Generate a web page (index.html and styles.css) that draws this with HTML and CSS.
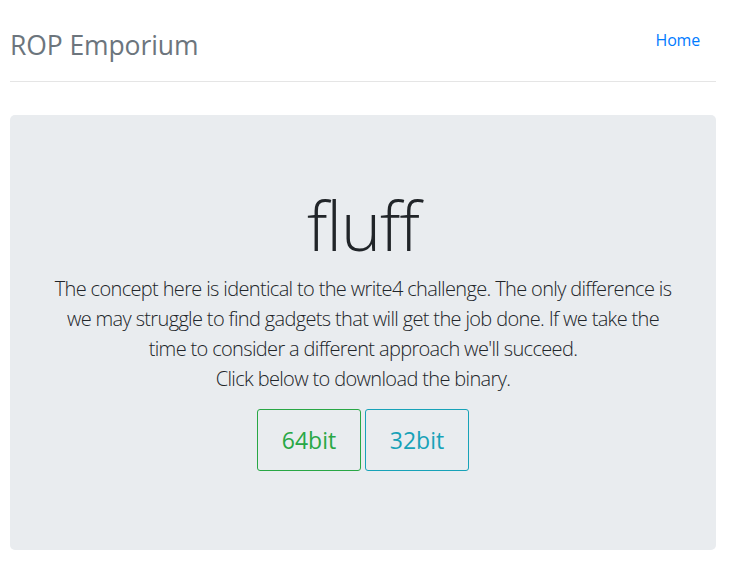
FILE: index.html
```html
<!DOCTYPE html>
<html lang="en">
<head>
<meta charset="utf-8">
<title>ROP Emporium - fluff</title>
<link rel="stylesheet" href="styles.css">
</head>
<body>
<div class="container">
  <header class="header">
    <h3 class="brand">ROP Emporium</h3>
    <nav class="nav">
      <a class="nav-link" href="#">Home</a>
    </nav>
  </header>
  <main class="jumbotron">
    <h1 class="title">fluff</h1>
    <p class="lead">The concept here is identical to the write4 challenge. The only difference is we may struggle to find gadgets that will get the job done. If we take the time to consider a different approach we'll succeed.<br>Click below to download the binary.</p>
    <div class="buttons">
      <a class="btn btn-success" href="#">64bit</a>
      <a class="btn btn-info" href="#">32bit</a>
    </div>
  </main>
</div>
</body>
</html>
```

FILE: styles.css
```css
html, body {
  margin: 0;
  padding: 0;
  background: #fff;
}
body {
  font-family: "Open Sans", "Noto Sans", sans-serif;
  color: #212529;
  font-size: 16px;
}
.container {
  width: 706px;
  padding-left: 10px;
}
.header {
  display: flex;
  justify-content: space-between;
  align-items: flex-start;
  padding-top: 20px;
  padding-bottom: 12px;
  border-bottom: 1px solid #e5e5e5;
}
.brand {
  margin: 1px 0 0 0;
  font-size: 26.5px;
  line-height: 48px;
  font-weight: 400;
  color: #6c757d;
  letter-spacing: -0.1px;
}
.nav-link {
  display: block;
  padding: 8px 16px;
  line-height: 24px;
  color: #007bff;
  text-decoration: none;
  letter-spacing: -0.2px;
}
.jumbotron {
  margin-top: 33px;
  background: #e9ecef;
  border-radius: 5px;
  padding: 66px 32px 79px;
  text-align: center;
}
.title {
  margin: 0 0 5px 0;
  font-size: 68px;
  font-weight: 300;
  line-height: 88px;
  letter-spacing: -1px;
}
.lead {
  max-width: 626px;
  margin: 0 auto 15px;
  font-size: 20px;
  font-weight: 300;
  line-height: 30px;
  letter-spacing: -0.65px;
}
.buttons {
  display: flex;
  justify-content: center;
  gap: 4px;
}
.btn {
  display: block;
  width: 102px;
  height: 60px;
  box-sizing: content-box;
  border: 1px solid;
  border-radius: 3px;
  font-size: 23px;
  line-height: 60px;
  font-weight: 400;
  text-decoration: none;
}
.btn-success {
  color: #28a745;
  border-color: #28a745;
}
.btn-info {
  color: #17a2b8;
  border-color: #17a2b8;
}
```
